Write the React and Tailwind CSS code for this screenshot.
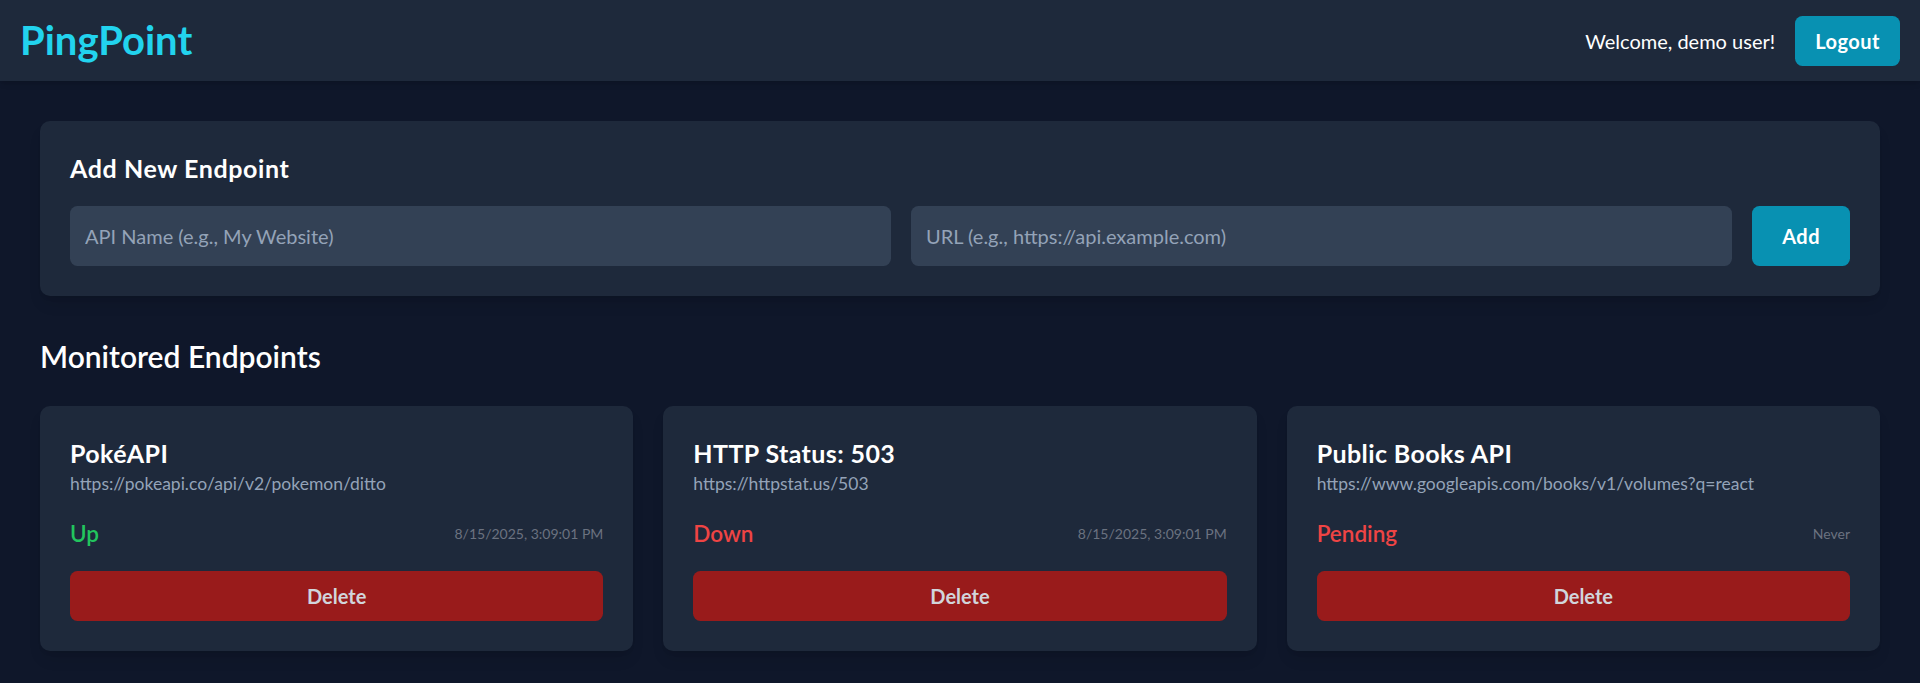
import React, { useState } from "react";

// The reference was captured at 125% browser zoom, so sizes below are the
// usual Tailwind scale multiplied by 1.25 (p-6 -> 30px, text-xl -> 25px ...).
// Colours are the classic (v3) slate / cyan / red palette values.

const initialEndpoints = [
  {
    id: 1,
    name: "PokéAPI",
    url: "https://pokeapi.co/api/v2/pokemon/ditto",
    status: "Up",
    lastChecked: "8/15/2025, 3:09:01 PM",
  },
  {
    id: 2,
    name: "HTTP Status: 503",
    url: "https://httpstat.us/503",
    status: "Down",
    lastChecked: "8/15/2025, 3:09:01 PM",
  },
  {
    id: 3,
    name: "Public Books API",
    url: "https://www.googleapis.com/books/v1/volumes?q=react",
    status: "Pending",
    lastChecked: "Never",
  },
];

function Header() {
  return (
    <header className="flex items-center justify-between h-[81px] px-5 bg-[#1e293b] shadow-md">
      <h1 className="text-[40px] leading-[45px] font-bold text-[#22d3ee]">
        PingPoint
      </h1>
      <div className="flex items-center gap-5">
        <span className="text-[20px] leading-[30px] text-white">
          Welcome, demo user!
        </span>
        <button className="bg-[#0891b2] hover:bg-[#0e7490] text-white font-bold text-[20px] leading-[30px] tracking-[0.5px] px-5 py-[10px] rounded-[7.5px]">
          Logout
        </button>
      </div>
    </header>
  );
}

function AddEndpointForm({ onAdd }) {
  const [name, setName] = useState("");
  const [url, setUrl] = useState("");

  const handleSubmit = (e) => {
    e.preventDefault();
    if (!name || !url) return;
    onAdd(name, url);
    setName("");
    setUrl("");
  };

  return (
    <div className="bg-[#1e293b] p-[30px] rounded-[10px] shadow-lg mb-10">
      <h2 className="text-[25px] leading-[35px] font-bold tracking-[0.6px] text-white mb-5">
        Add New Endpoint
      </h2>
      <form onSubmit={handleSubmit} className="flex gap-5">
        <input
          type="text"
          value={name}
          onChange={(e) => setName(e.target.value)}
          placeholder="API Name (e.g., My Website)"
          className="flex-1 min-w-0 bg-[#334155] text-white placeholder:text-[#94a3b8] text-[20px] leading-[30px] p-[15px] rounded-[7.5px] focus:outline-none"
        />
        <input
          type="text"
          value={url}
          onChange={(e) => setUrl(e.target.value)}
          placeholder="URL (e.g., https://api.example.com)"
          className="flex-1 min-w-0 bg-[#334155] text-white placeholder:text-[#94a3b8] text-[20px] leading-[30px] p-[15px] rounded-[7.5px] focus:outline-none"
        />
        <button
          type="submit"
          className="bg-[#0891b2] hover:bg-[#0e7490] text-white font-bold text-[20px] leading-[30px] tracking-[0.5px] px-[30px] py-[15px] rounded-[7.5px]"
        >
          Add
        </button>
      </form>
    </div>
  );
}

function EndpointCard({ endpoint, onDelete }) {
  const statusColor =
    endpoint.status === "Up" ? "text-[#22c55e]" : "text-[#ef4444]";

  return (
    <div className="bg-[#1e293b] p-[30px] rounded-[10px] shadow-lg">
      <h3 className="text-[25px] leading-[35px] font-bold tracking-[0.4px] text-white">
        {endpoint.name}
      </h3>
      <p className="text-[17.5px] leading-[25px] text-[#94a3b8] truncate">
        {endpoint.url}
      </p>
      <div className="flex items-center justify-between mt-5">
        <span className={`text-[22.5px] leading-[35px] font-semibold ${statusColor}`}>
          {endpoint.status}
        </span>
        <span className="text-[14px] leading-[20px] text-[#6b7280]">
          {endpoint.lastChecked}
        </span>
      </div>
      <button
        onClick={() => onDelete(endpoint.id)}
        className="w-full mt-5 bg-[#991b1b] hover:bg-[#7f1d1d] text-[#d1d5db] font-bold text-[20px] leading-[30px] py-[10px] rounded-[7.5px]"
      >
        Delete
      </button>
    </div>
  );
}

export default function App() {
  const [endpoints, setEndpoints] = useState(initialEndpoints);

  const handleAdd = (name, url) => {
    setEndpoints([
      ...endpoints,
      { id: Date.now(), name, url, status: "Pending", lastChecked: "Never" },
    ]);
  };

  const handleDelete = (id) => {
    setEndpoints(endpoints.filter((ep) => ep.id !== id));
  };

  return (
    <div className="min-h-screen bg-[#0f172a] font-['Lato','Open_Sans',sans-serif]">
      <Header />
      <main className="p-10">
        <AddEndpointForm onAdd={handleAdd} />
        <h2 className="text-[30px] leading-[40px] font-semibold text-white mb-[30px]">
          Monitored Endpoints
        </h2>
        <div className="grid grid-cols-3 gap-[30px]">
          {endpoints.map((ep) => (
            <EndpointCard key={ep.id} endpoint={ep} onDelete={handleDelete} />
          ))}
        </div>
      </main>
    </div>
  );
}
